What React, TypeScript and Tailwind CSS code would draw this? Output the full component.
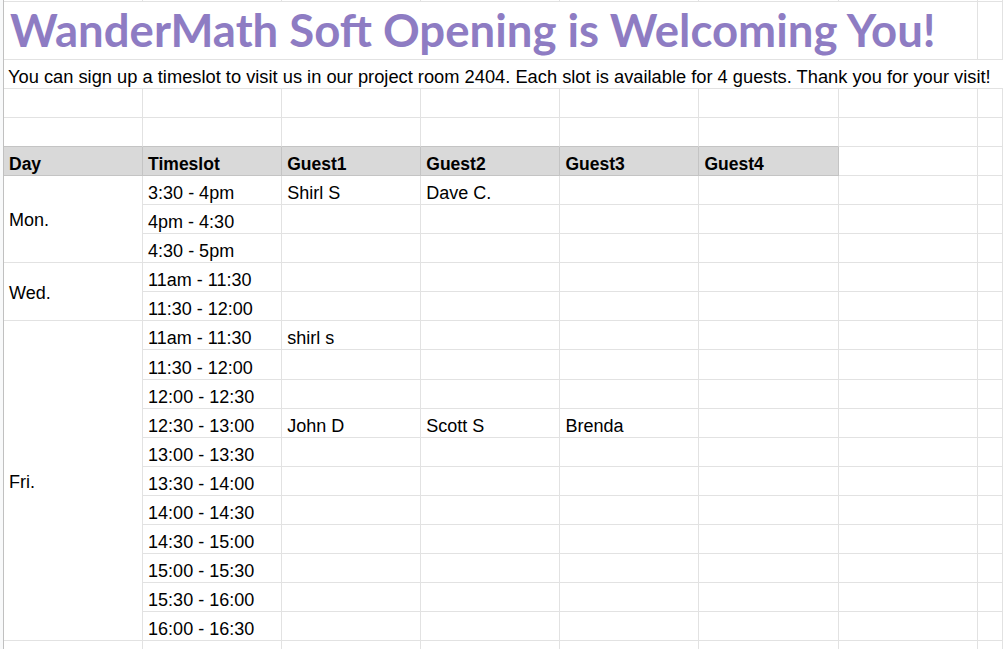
import React from "react";

const line = "border-[#e2e2e2]";

type Slot = { time: string; guests?: string[] };
type Day = { day: string; span: string; slots: Slot[] };

const days: Day[] = [
  {
    day: "Mon.",
    span: "row-span-3",
    slots: [
      { time: "3:30 - 4pm", guests: ["Shirl S", "Dave C."] },
      { time: "4pm - 4:30" },
      { time: "4:30 - 5pm" },
    ],
  },
  {
    day: "Wed.",
    span: "row-span-2",
    slots: [{ time: "11am - 11:30" }, { time: "11:30 - 12:00" }],
  },
  {
    day: "Fri.",
    span: "row-span-11",
    slots: [
      { time: "11am - 11:30", guests: ["shirl s"] },
      { time: "11:30 - 12:00" },
      { time: "12:00 - 12:30" },
      { time: "12:30 - 13:00", guests: ["John D", "Scott S", "Brenda"] },
      { time: "13:00 - 13:30" },
      { time: "13:30 - 14:00" },
      { time: "14:00 - 14:30" },
      { time: "14:30 - 15:00" },
      { time: "15:00 - 15:30" },
      { time: "15:30 - 16:00" },
      { time: "16:00 - 16:30" },
    ],
  },
];

const headers = ["Day", "Timeslot", "Guest1", "Guest2", "Guest3", "Guest4"];

function Cell({ children, className = "" }: { children?: React.ReactNode; className?: string }) {
  return (
    <div className={`flex items-end overflow-hidden whitespace-nowrap border-r border-b px-[5px] pb-[1px] leading-[20px] ${line} ${className}`}>
      {children}
    </div>
  );
}

function EmptyRow({ darkBottom = false }: { darkBottom?: boolean }) {
  return (
    <>
      {Array.from({ length: 8 }).map((_, i) => (
        <Cell key={i} className={darkBottom && i < 6 ? "!border-b-[#c4c4c4]" : ""} />
      ))}
    </>
  );
}

export default function App() {
  return (
    <div
      className="flex h-[649px] w-[1003px] overflow-hidden bg-white text-[18px] text-black"
      style={{ fontFamily: '"Liberation Sans", Arial, sans-serif' }}
    >
      {/* row header strip */}
      <div className="w-[4px] shrink-0 border-r border-[#c0c0c0] bg-[#f8f9fa]" />

      <div className="grid flex-1 grid-cols-[139.1px_139.1px_139.1px_139.1px_139.1px_139.1px_139.1px_1fr] grid-rows-[2px_57.5px_repeat(21,29.1px)]">
        {/* sliver of the row above */}
        {Array.from({ length: 8 }).map((_, i) => (
          <div key={i} className={`border-r border-b ${line}`} />
        ))}

        {/* title */}
        <Cell className="col-span-7 pb-[0px] pl-[6px]">
          <span
            className="text-[45.5px] font-bold leading-[56px] text-[#8e7cc3]"
            style={{ fontFamily: 'Lato, "DejaVu Sans", sans-serif' }}
          >
            WanderMath Soft Opening is Welcoming You!
          </span>
        </Cell>
        <Cell />

        {/* description, overflowing across columns */}
        <div className={`col-span-8 flex items-end whitespace-nowrap border-b px-[4px] pb-[1px] text-[18.3px] leading-[20px] ${line}`}>
          You can sign up a timeslot to visit us in our project room 2404. Each slot is available for 4 guests. Thank you for your visit!
        </div>

        <EmptyRow />
        <EmptyRow darkBottom />

        {/* header */}
        {headers.map((h) => (
          <Cell key={h} className="!border-b-[#c4c4c4] !border-r-[#c4c4c4] bg-[#d9d9d9] text-[17.5px] font-bold">
            {h}
          </Cell>
        ))}
        <Cell />
        <Cell />

        {/* data */}
        {days.map((d) =>
          d.slots.map((s, idx) => (
            <React.Fragment key={d.day + s.time}>
              {idx === 0 && <Cell className={`${d.span} !items-center !pb-0 pt-[2px]`}>{d.day}</Cell>}
              <Cell>{s.time}</Cell>
              {[0, 1, 2, 3].map((g) => (
                <Cell key={g}>{s.guests?.[g] ?? ""}</Cell>
              ))}
              <Cell />
              <Cell />
            </React.Fragment>
          ))
        )}

        {/* partial row at the bottom */}
        <EmptyRow />
      </div>
    </div>
  );
}
